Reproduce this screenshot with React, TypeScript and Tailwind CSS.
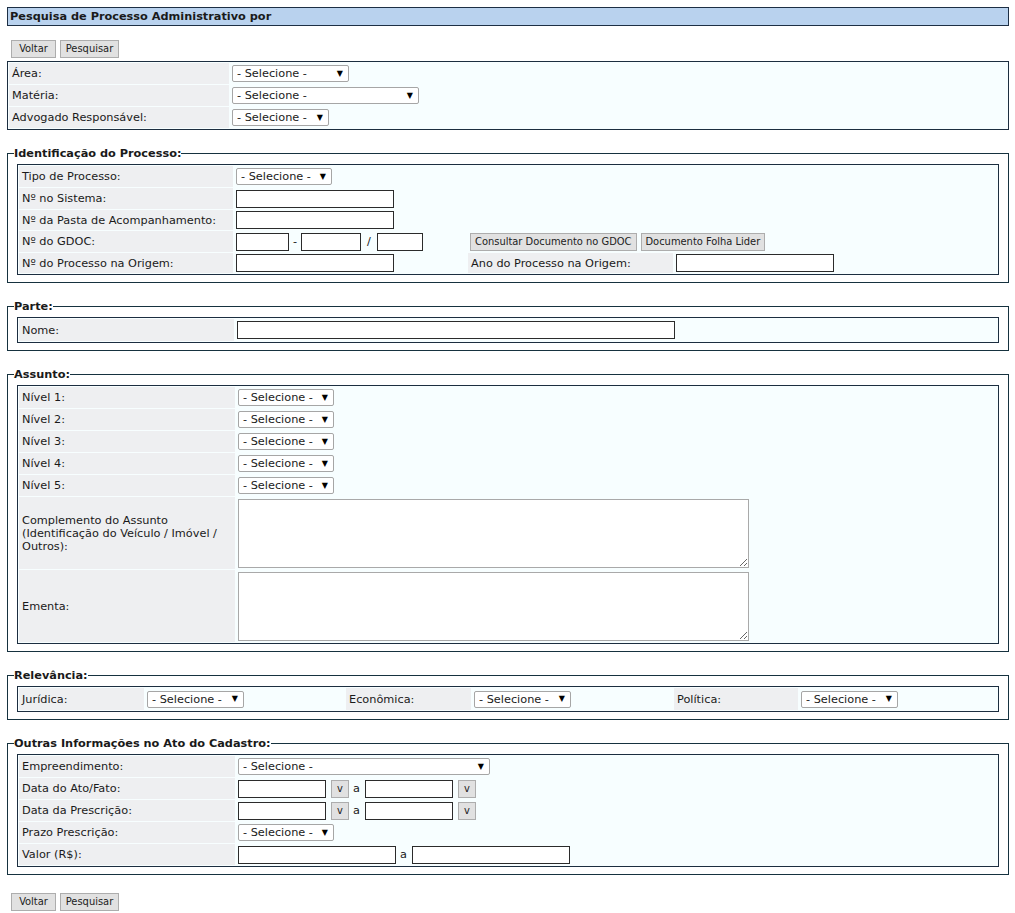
import type { ReactNode } from "react";

const LABEL = "flex items-center bg-[#eeeff1] pl-[3px]";
const CELL = "flex items-center pl-[2px]";

function Sel({ className }: { className: string }) {
  return (
    <span className="relative inline-flex">
      <select
        className={`h-[17px] appearance-none rounded-[2px] border border-[#a6a6a6] bg-white pl-[4px] text-[11.3px] leading-[13px] text-[#1a1a1a] outline-none ${className}`}
        defaultValue=""
      >
        <option value="">- Selecione -</option>
      </select>
      <span className="pointer-events-none absolute right-[6px] top-1/2 -translate-y-1/2 text-[8px] leading-none text-black">
        ▼
      </span>
    </span>
  );
}

function Txt({ className }: { className: string }) {
  return <input type="text" className={`h-[18px] border border-[#2b2b2b] bg-white px-1 text-[11px] outline-none ${className}`} />;
}

function Btn({ children, className = "" }: { children: ReactNode; className?: string }) {
  return (
    <button
      type="button"
      className={`h-[18px] border border-[#adadad] bg-[#e1e1e1] px-[4px] font-['DejaVu_Sans_Condensed','DejaVu_Sans',sans-serif] text-[11px] leading-[14px] text-[#222] font-stretch-condensed ${className}`}
    >
      {children}
    </button>
  );
}

function Fieldset({ title, children }: { title: string; children: ReactNode }) {
  return (
    <fieldset className="mt-[17px] border border-[#16323f] px-[9px] pb-[7px] pt-[4px]">
      <legend className="-ml-[3px] text-[11.3px] font-bold leading-[13px] text-[#1a1a1a]">{title}</legend>
      {children}
    </fieldset>
  );
}

function Actions() {
  return (
    <div className="flex gap-1 pl-1">
      <Btn className="w-[45px]">Voltar</Btn>
      <Btn className="w-[59px]">Pesquisar</Btn>
    </div>
  );
}

export default function App() {
  return (
    <div className="min-h-screen bg-white pt-[7px] font-['DejaVu_Sans',Verdana,sans-serif] text-[11.3px] leading-[13px] text-[#1a1a1a]">
      <div className="ml-[7px] w-[1002px]">
        {/* cabeçalho */}
        <div className="h-[19px] border border-[#1d2f44] bg-[#b9d2ee] pl-[2px] pt-[2px] font-bold">
          Pesquisa de Processo Administrativo por
        </div>

        <div className="mt-[14px]">
          <Actions />
        </div>

        {/* filtros gerais */}
        <div className="mt-[3px] flex flex-col gap-px border border-[#1c2e40] bg-[#f7feff] p-px">
          <div className="grid h-[21px] grid-cols-[220px_1fr] gap-px">
            <div className={LABEL}>Área:</div>
            <div className={CELL}><Sel className="w-[117px]" /></div>
          </div>
          <div className="grid h-[21px] grid-cols-[220px_1fr] gap-px">
            <div className={LABEL}>Matéria:</div>
            <div className={CELL}><Sel className="w-[187px]" /></div>
          </div>
          <div className="grid h-[21px] grid-cols-[220px_1fr] gap-px">
            <div className={LABEL}>Advogado Responsável:</div>
            <div className={CELL}><Sel className="w-[97px]" /></div>
          </div>
        </div>

        {/* identificação */}
        <Fieldset title="Identificação do Processo:">
          <div className="grid grid-cols-[214px_233px_205px_1fr] grid-rows-[21px_21px_20px_21px_20px] gap-px border border-[#1c2e40] bg-[#f7feff] p-px">
            <div className={LABEL}>Tipo de Processo:</div>
            <div className={`${CELL} col-span-3`}><Sel className="w-[96px]" /></div>

            <div className={LABEL}>Nº no Sistema:</div>
            <div className={`${CELL} col-span-3`}><Txt className="w-[158px]" /></div>

            <div className={LABEL}>Nº da Pasta de Acompanhamento:</div>
            <div className={`${CELL} col-span-3`}><Txt className="w-[158px]" /></div>

            <div className={LABEL}>Nº do GDOC:</div>
            <div className={`${CELL} gap-[4px]`}>
              <Txt className="w-[53px]" />
              <span>-</span>
              <Txt className="w-[60px]" />
              <span className="px-[2px]">/</span>
              <Txt className="w-[46px]" />
            </div>
            <div className={`${CELL} col-span-2 gap-[4px]`}>
              <Btn className="h-[17px]">Consultar Documento no GDOC</Btn>
              <Btn className="h-[17px]">Documento Folha Lider</Btn>
            </div>

            <div className={LABEL}>Nº do Processo na Origem:</div>
            <div className={CELL}><Txt className="w-[158px]" /></div>
            <div className={LABEL}>Ano do Processo na Origem:</div>
            <div className={CELL}><Txt className="w-[158px]" /></div>
          </div>
        </Fieldset>

        {/* parte */}
        <Fieldset title="Parte:">
          <div className="grid h-[26px] grid-cols-[215px_1fr] gap-px border border-[#1c2e40] bg-[#f7feff] p-px">
            <div className={LABEL}>Nome:</div>
            <div className={CELL}><Txt className="w-[438px]" /></div>
          </div>
        </Fieldset>

        {/* assunto */}
        <Fieldset title="Assunto:">
          <div className="grid grid-cols-[216px_1fr] gap-px border border-[#1c2e40] bg-[#f7feff] p-px">
            {["Nível 1:", "Nível 2:", "Nível 3:", "Nível 4:", "Nível 5:"].map((n) => (
              <div key={n} className="contents">
                <div className={`${LABEL} h-[21px]`}>{n}</div>
                <div className={`${CELL} h-[21px]`}><Sel className="w-[96px]" /></div>
              </div>
            ))}
            <div className={`${LABEL} h-[72px] pr-2`}>Complemento do Assunto (Identificação do Veículo / Imóvel / Outros):</div>
            <div className={`${CELL} h-[72px]`}>
              <textarea className="h-[69px] w-[511px] border border-[#a9a9a9] bg-white outline-none" />
            </div>
            <div className={`${LABEL} h-[72px]`}>Ementa:</div>
            <div className={`${CELL} h-[72px]`}>
              <textarea className="h-[69px] w-[511px] border border-[#a9a9a9] bg-white outline-none" />
            </div>
          </div>
        </Fieldset>

        {/* relevância */}
        <Fieldset title="Relevância:">
          <div className="grid h-[26px] grid-cols-[125px_200px_125px_201px_124px_1fr] gap-px border border-[#1c2e40] bg-[#f7feff] p-px">
            <div className={LABEL}>Jurídica:</div>
            <div className={CELL}><Sel className="w-[97px]" /></div>
            <div className={LABEL}>Econômica:</div>
            <div className={CELL}><Sel className="w-[97px]" /></div>
            <div className={LABEL}>Política:</div>
            <div className={CELL}><Sel className="w-[97px]" /></div>
          </div>
        </Fieldset>

        {/* outras informações */}
        <Fieldset title="Outras Informações no Ato do Cadastro:">
          <div className="grid auto-rows-[21px] grid-cols-[216px_1fr] gap-px border border-[#1c2e40] bg-[#f7feff] p-px">
            <div className={LABEL}>Empreendimento:</div>
            <div className={CELL}><Sel className="w-[252px]" /></div>

            {["Data do Ato/Fato:", "Data da Prescrição:"].map((d) => (
              <div key={d} className="contents">
                <div className={LABEL}>{d}</div>
                <div className={CELL}>
                  <Txt className="w-[88px]" />
                  <Btn className="ml-[5px] w-[18px] px-0">v</Btn>
                  <span className="ml-[4px] mr-[5px]">a</span>
                  <Txt className="w-[88px]" />
                  <Btn className="ml-[5px] w-[18px] px-0">v</Btn>
                </div>
              </div>
            ))}

            <div className={LABEL}>Prazo Prescrição:</div>
            <div className={CELL}><Sel className="w-[96px]" /></div>

            <div className={LABEL}>Valor (R$):</div>
            <div className={CELL}>
              <Txt className="w-[158px]" />
              <span className="ml-[4px] mr-[5px]">a</span>
              <Txt className="w-[158px]" />
            </div>
          </div>
        </Fieldset>

        <div className="mt-[18px]">
          <Actions />
        </div>
      </div>
    </div>
  );
}
